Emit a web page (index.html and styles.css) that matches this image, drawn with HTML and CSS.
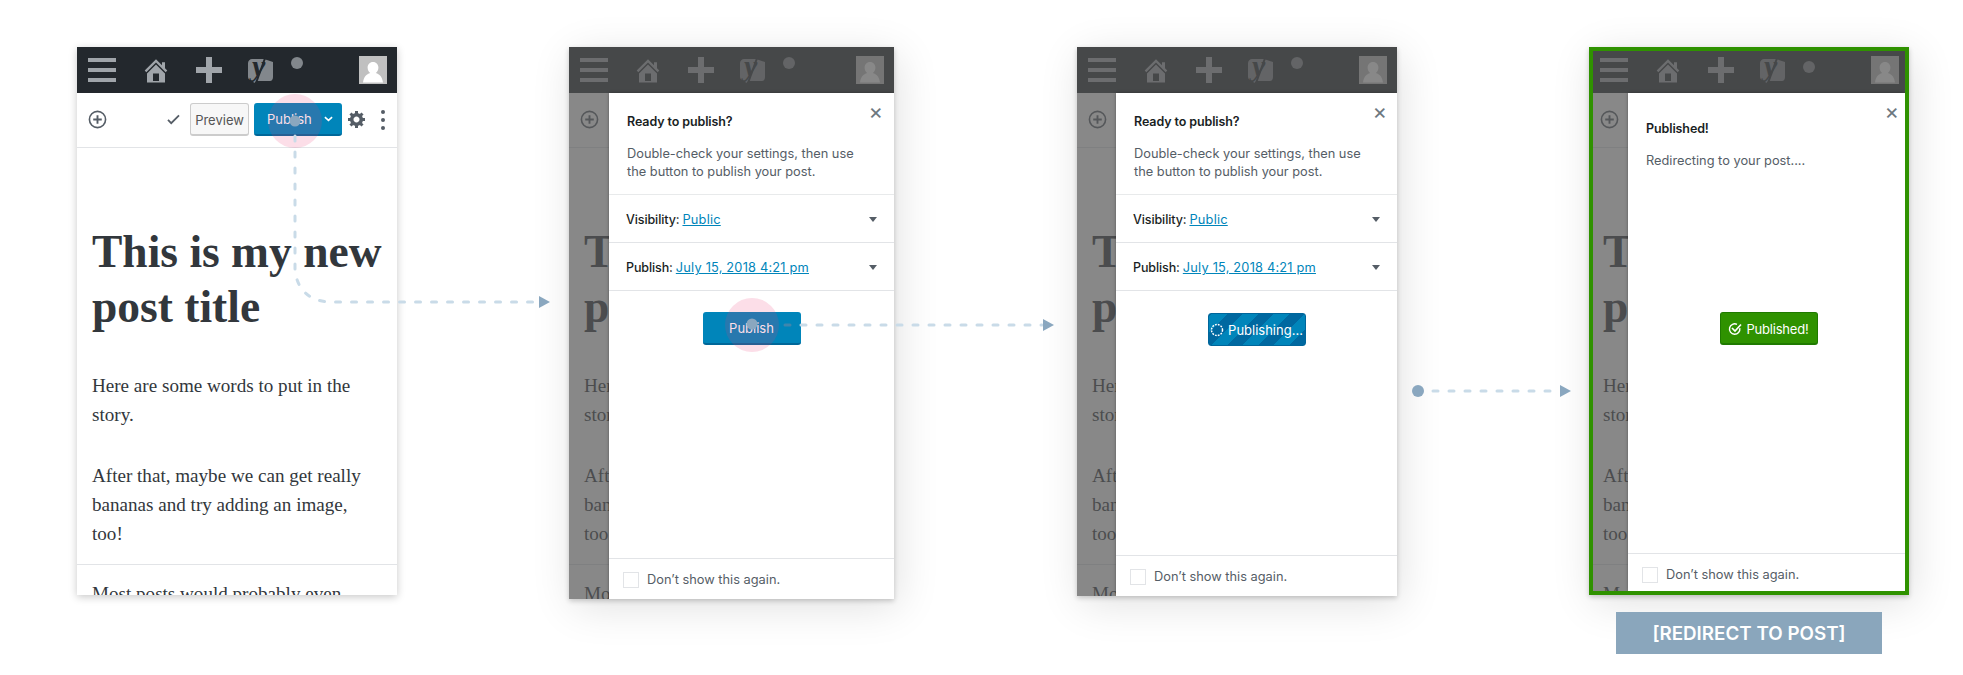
FILE: index.html
```html
<!DOCTYPE html>
<html>
<head>
  <meta charset="utf-8">
  <title>Publish flow</title>
  <link rel="stylesheet" href="styles.css">
</head>
<body>
  <svg class="defs" width="0" height="0">
    <symbol id="i-home" viewBox="2 2 16 16"><path d="M16 8.5l1.53 1.53-1.06 1.06L10 4.62l-6.47 6.47-1.06-1.06L10 2.5l4 4v-2h2v4zm-6-2.46l6 5.99V18H4v-5.97zM12 17v-5H8v5h4z"/></symbol>
    <symbol id="i-plus" viewBox="0 0 26 26"><path d="M10 0h6v10h10v6H16v10h-6V16H0v-6h10z"/></symbol>
    <symbol id="i-avatar" viewBox="0 0 28 28"><path d="M0 0h28v28H0z" class="avatar-bg"/><path d="M14 6c3.3 0 5.4 2.5 5.4 5.6 0 2.400-1.100 4.300-2.600 5.400 3.800 1.100 6.400 4 7.200 9.500H4c.8-5.500 3.400-8.400 7.200-9.500-1.500-1.100-2.600-3-2.600-5.400C8.600 8.500 10.700 6 14 6z" class="avatar-fg"/></symbol>
    <symbol id="i-add" viewBox="0 0 20 20"><circle cx="10" cy="10" r="8.500" fill="none" stroke="currentColor" stroke-width="1.700"/><path d="M9 5.500h2V9h3.500v2H11v3.500H9V11H5.500V9H9z" fill="currentColor"/></symbol>
  </svg>

  <main class="canvas">

    <section class="phone phone-one">
      <header class="adminbar">
        <div class="burger"><i></i><i></i><i></i></div>
        <svg class="ico-home"><use href="#i-home"/></svg>
        <svg class="ico-plus"><use href="#i-plus"/></svg>
        <svg class="ico-yoast" viewBox="0 0 27 30"><path d="M5 4h12l9 3v15c0 2-1 4-3 4H10l-3 2-1-2c-3 0-5-2-5-4V8c0-2 2-4 4-4z"/><text class="yoast-y" x="5" y="21">y</text><path class="yoast-cut" d="M19 .5L9 28"/></svg>
        <span class="dot"></span>
        <svg class="ico-avatar"><use href="#i-avatar"/></svg>
      </header>
      <div class="toolbar">
        <svg class="ico-add"><use href="#i-add"/></svg>
        <svg class="ico-saved" viewBox="0 0 14 12"><path d="M1 6.500l3.500 3.500L13 1.500" fill="none" stroke="currentColor" stroke-width="2"/></svg>
        <button class="btn-preview">Preview</button>
        <div class="btn-split">
          <span class="btn-split-label">Publish</span>
          <svg class="ico-chevron" viewBox="0 0 10 6"><path d="M1 1l4 3.500L9 1" fill="none" stroke="currentColor" stroke-width="1.800"/></svg>
        </div>
        <svg class="ico-gear" viewBox="1 2 17 17"><path d="M18 12h-2.180c-.17.7-.44 1.350-.81 1.930l1.540 1.540-2.100 2.100-1.540-1.540c-.58.36-1.230.63-1.910.79V19H8v-2.180c-.68-.16-1.330-.43-1.910-.79l-1.540 1.540-2.120-2.120 1.540-1.540c-.36-.58-.63-1.230-.79-1.910H1V9.030h2.170c.16-.7.44-1.350.8-1.940L2.430 5.550l2.100-2.100 1.540 1.540c.58-.37 1.240-.64 1.930-.81V2h3v2.180c.68.16 1.330.43 1.910.79l1.540-1.540 2.120 2.120-1.540 1.540c.36.59.64 1.240.8 1.940H18V12zm-8.500 1.500c1.660 0 3-1.340 3-3s-1.340-3-3-3-3 1.340-3 3 1.340 3 3 3z"/></svg>
        <div class="kebab"><i></i><i></i><i></i></div>
      </div>
      <article class="post">
        <h1>This is my new post title</h1>
        <p>Here are some words to put in the story.</p>
        <p>After that, maybe we can get really bananas and try adding an image, too!</p>
        <hr>
        <p>Most posts would probably even</p>
      </article>
    </section>

    <section class="phone phone-two">
      <header class="adminbar">
        <div class="burger"><i></i><i></i><i></i></div>
        <svg class="ico-home"><use href="#i-home"/></svg>
        <svg class="ico-plus"><use href="#i-plus"/></svg>
        <svg class="ico-yoast" viewBox="0 0 27 30"><path d="M5 4h12l9 3v15c0 2-1 4-3 4H10l-3 2-1-2c-3 0-5-2-5-4V8c0-2 2-4 4-4z"/><text class="yoast-y" x="5" y="21">y</text><path class="yoast-cut" d="M19 .5L9 28"/></svg>
        <span class="dot"></span>
        <svg class="ico-avatar"><use href="#i-avatar"/></svg>
      </header>
      <div class="toolbar">
        <svg class="ico-add"><use href="#i-add"/></svg>
      </div>
      <article class="post">
        <h1>This is my new post title</h1>
        <p>Here are some words to put in the story.</p>
        <p>After that, maybe we can get really bananas and try adding an image, too!</p>
        <hr>
        <p>Most posts would probably even</p>
      </article>
      <div class="dim"></div>
      <aside class="modal">
        <button class="modal-close">&times;</button>
        <div class="modal-head">
          <h2>Ready to publish?</h2>
          <p>Double-check your settings, then use the button to publish your post.</p>
        </div>
        <div class="modal-row"><b>Visibility:</b> <a href="#">Public</a><span class="caret"></span></div>
        <div class="modal-row"><b>Publish:</b> <a href="#">July 15, 2018 4:21 pm</a><span class="caret"></span></div>
        <div class="modal-action"><span class="btn-big">Publish</span></div>
        <label class="modal-foot"><span class="box"></span>Don&rsquo;t show this again.</label>
      </aside>
    </section>

    <section class="phone phone-three">
      <header class="adminbar">
        <div class="burger"><i></i><i></i><i></i></div>
        <svg class="ico-home"><use href="#i-home"/></svg>
        <svg class="ico-plus"><use href="#i-plus"/></svg>
        <svg class="ico-yoast" viewBox="0 0 27 30"><path d="M5 4h12l9 3v15c0 2-1 4-3 4H10l-3 2-1-2c-3 0-5-2-5-4V8c0-2 2-4 4-4z"/><text class="yoast-y" x="5" y="21">y</text><path class="yoast-cut" d="M19 .5L9 28"/></svg>
        <span class="dot"></span>
        <svg class="ico-avatar"><use href="#i-avatar"/></svg>
      </header>
      <div class="toolbar">
        <svg class="ico-add"><use href="#i-add"/></svg>
      </div>
      <article class="post">
        <h1>This is my new post title</h1>
        <p>Here are some words to put in the story.</p>
        <p>After that, maybe we can get really bananas and try adding an image, too!</p>
        <hr>
        <p>Most posts would probably even</p>
      </article>
      <div class="dim"></div>
      <aside class="modal">
        <button class="modal-close">&times;</button>
        <div class="modal-head">
          <h2>Ready to publish?</h2>
          <p>Double-check your settings, then use the button to publish your post.</p>
        </div>
        <div class="modal-row"><b>Visibility:</b> <a href="#">Public</a><span class="caret"></span></div>
        <div class="modal-row"><b>Publish:</b> <a href="#">July 15, 2018 4:21 pm</a><span class="caret"></span></div>
        <div class="modal-action">
          <span class="btn-big btn-busy">
            <svg class="ico-spin" viewBox="0 0 14 14"><circle cx="7" cy="7" r="5.500" fill="none" stroke="#fff" stroke-width="1.500" stroke-dasharray="1.800 1.100"/></svg>
            Publishing...
          </span>
        </div>
        <label class="modal-foot"><span class="box"></span>Don&rsquo;t show this again.</label>
      </aside>
    </section>

    <section class="phone phone-four">
      <header class="adminbar">
        <div class="burger"><i></i><i></i><i></i></div>
        <svg class="ico-home"><use href="#i-home"/></svg>
        <svg class="ico-plus"><use href="#i-plus"/></svg>
        <svg class="ico-yoast" viewBox="0 0 27 30"><path d="M5 4h12l9 3v15c0 2-1 4-3 4H10l-3 2-1-2c-3 0-5-2-5-4V8c0-2 2-4 4-4z"/><text class="yoast-y" x="5" y="21">y</text><path class="yoast-cut" d="M19 .5L9 28"/></svg>
        <span class="dot"></span>
        <svg class="ico-avatar"><use href="#i-avatar"/></svg>
      </header>
      <div class="toolbar">
        <svg class="ico-add"><use href="#i-add"/></svg>
      </div>
      <article class="post">
        <h1>This is my new post title</h1>
        <p>Here are some words to put in the story.</p>
        <p>After that, maybe we can get really bananas and try adding an image, too!</p>
        <hr>
        <p>Most posts would probably even</p>
      </article>
      <div class="dim"></div>
      <aside class="modal">
        <button class="modal-close">&times;</button>
        <div class="modal-head">
          <h2>Published!</h2>
          <p>Redirecting to your post....</p>
        </div>
        <div class="modal-action">
          <span class="btn-big btn-done">
            <svg class="ico-done" viewBox="0 0 14 14"><path d="M11.800 6.200A5.200 5.200 0 1 1 9 2.400" fill="none" stroke="#fff" stroke-width="1.400"/><path d="M4 6l3 3 6-6.500" fill="none" stroke="#fff" stroke-width="1.700"/></svg>
            Published!
          </span>
        </div>
        <label class="modal-foot"><span class="box"></span>Don&rsquo;t show this again.</label>
      </aside>
    </section>

    <div class="redirect">[REDIRECT TO POST]</div>

    <svg class="flow" width="1963" height="675" viewBox="0 0 1963 675">
      <circle class="tap" cx="295" cy="121" r="27"/>
      <path class="dash" d="M295 136V270C297 290 310 302 332 302H538"/>
      <circle class="node" cx="295" cy="121" r="5.500"/>
      <path class="node" d="M539 296l11 6-11 6z"/>

      <circle class="tap" cx="752" cy="325" r="27"/>
      <path class="dash dash-over" d="M785 325H790"/>
      <path class="dash" d="M801 325H1042"/>
      <circle class="node" cx="752" cy="324" r="5.500"/>
      <path class="node" d="M1043 319l11 6-11 6z"/>

      <circle class="node" cx="1418" cy="391" r="6"/>
      <path class="dash" d="M1433 391H1553"/>
      <path class="node" d="M1560 385l11 6-11 6z"/>
    </svg>
  </main>
</body>
</html>
```

FILE: styles.css
```css
* {
  box-sizing: border-box;
}
html, body {
  margin: 0;
  background: #fff;
}
.defs {
  position: absolute;
}
.canvas {
  position: relative;
  width: 1963px;
  height: 675px;
  overflow: hidden;
  font-family: Inter, "Liberation Sans", sans-serif;
}

/* the four screens sit on the canvas like frames of a diagram */
.phone {
  position: absolute;
  top: 47px;
  overflow: hidden;
  background: #fff;
  box-shadow: 0 2px 8px rgba(0, 0, 0, .22);
}
.phone-one {
  left: 77px;
  width: 320px;
  height: 548px;
}
.phone-two {
  left: 569px;
  width: 325px;
  height: 552px;
  box-shadow: 0 2px 5px rgba(0, 0, 0, .2), 4px 8px 40px rgba(0, 0, 0, .12);
}
.phone-three {
  left: 1077px;
  width: 320px;
  height: 549px;
  box-shadow: 0 2px 5px rgba(0, 0, 0, .2), 4px 8px 40px rgba(0, 0, 0, .12);
}
.phone-four {
  left: 1589px;
  width: 320px;
  height: 548px;
  border: 4px solid #2f9200;
  box-shadow: 0 2px 5px rgba(0, 0, 0, .2), 4px 8px 40px rgba(0, 0, 0, .12);
}

/* admin bar */
.adminbar {
  display: flex;
  align-items: center;
  gap: 28px;
  height: 46px;
  padding: 0 10px 0 11px;
  background: #23282d;
}
.burger {
  display: flex;
  flex-direction: column;
  gap: 6px;
  width: 28px;
}
.burger i {
  display: block;
  height: 4px;
  background: #a0a5aa;
}
.ico-home {
  width: 24px;
  height: 25px;
  fill: #a0a5aa;
}
.ico-plus {
  width: 26px;
  height: 26px;
  fill: #a0a5aa;
}
.ico-yoast {
  width: 27px;
  height: 30px;
  margin-left: -3px;
  overflow: visible;
  fill: #82878c;
}
.yoast-cut {
  fill: none;
  stroke: #23282d;
  stroke-width: 2;
}
.yoast-y {
  font: italic bold 30px "Liberation Serif", serif;
  fill: #23282d;
}
.dot {
  align-self: flex-start;
  width: 12px;
  height: 12px;
  margin: 10px 0 0 -11px;
  border-radius: 50%;
  background: #82878c;
}
.ico-avatar {
  width: 28px;
  height: 28px;
  margin-left: auto;
}
.avatar-bg {
  fill: #c0c0c0;
}
.avatar-fg {
  fill: #fff;
}

/* editor toolbar */
.toolbar {
  display: flex;
  align-items: center;
  height: 55px;
  padding: 0 12px 1px 11px;
  border-bottom: 1px solid #e2e4e7;
  color: #555d66;
}
.ico-add {
  width: 19px;
  height: 19px;
}
.ico-saved {
  width: 13px;
  height: 11px;
  margin: 0 10px 0 auto;
}
.btn-preview {
  width: 59px;
  height: 33px;
  padding: 2px 0 0;
  border: 1px solid #ccc;
  border-bottom-width: 2px;
  border-radius: 3px;
  background: #f7f7f7;
  color: #555;
  font: 13px Inter, sans-serif;
}
.btn-split {
  display: flex;
  align-items: center;
  width: 88px;
  height: 33px;
  margin-left: 5px;
  border-radius: 3px;
  border-bottom: 2px solid #006799;
  background: #0085ba;
  color: #fff;
  font-size: 13px;
}
.btn-split-label {
  flex: 1;
  padding: 1px 0 0 13px;
}
.ico-chevron {
  width: 9px;
  height: 6px;
  margin-right: 9px;
}
.ico-gear {
  width: 17px;
  height: 17px;
  margin-left: 6px;
  fill: #555d66;
}
.kebab {
  display: flex;
  flex-direction: column;
  gap: 4px;
  margin-left: 16px;
}
.kebab i {
  display: block;
  width: 4px;
  height: 4px;
  border-radius: 50%;
  background: #555d66;
}

/* post body, same in every frame */
.post {
  padding: 0 0 0 15px;
  color: #32373c;
  font-family: "Liberation Serif", serif;
}
.post h1 {
  margin: 0;
  padding-top: 76px;
  font-size: 45.5px;
  line-height: 55px;
  font-weight: 700;
}
.post p {
  margin: 0;
  padding: 32px 22px 0 0;
  font-size: 19.1px;
  line-height: 29px;
}
.post h1 + p {
  padding-top: 37px;
}
.post hr {
  height: 1px;
  margin: 16px 0 0 -15px;
  border: 0;
  background: #e2e4e7;
}
.post hr + p {
  padding-top: 14px;
}

/* dimmed state */
.dim {
  position: absolute;
  inset: 0;
  background: rgba(85, 85, 85, .7);
}
.modal {
  position: absolute;
  top: 46px;
  right: 0;
  bottom: 0;
  display: flex;
  flex-direction: column;
  background: #fff;
  box-shadow: 0 0 3px rgba(0, 0, 0, .35);
  color: #191e23;
  font-size: 12.8px;
}
.phone-two .modal {
  width: 285px;
}
.phone-three .modal {
  width: 281px;
}
.phone-four .modal {
  top: 42px;
  width: 277px;
}
.modal-close {
  position: absolute;
  top: 8px;
  right: 11px;
  padding: 0;
  border: 0;
  background: none;
  color: #6c7781;
  font: 22px/20px Inter, sans-serif;
}
.phone-three .modal-close {
  right: 10px;
}
.phone-four .modal-close {
  right: 6px;
}
.modal-head {
  height: 102px;
  padding: 21px 18px 0;
  border-bottom: 1px solid #e8eaeb;
}
.modal-head h2 {
  margin: 0;
  font-size: 12.5px;
  line-height: 16px;
  font-weight: 600;
  letter-spacing: -.1px;
}
.modal-head p {
  margin: 15px 0 0;
  color: #555d66;
  line-height: 18px;
}
.modal-row {
  display: flex;
  align-items: center;
  gap: 3px;
  height: 48px;
  padding: 2px 17px 0;
  border-bottom: 1px solid #e2e4e7;
}
.modal-row b {
  font-size: 12.5px;
  font-weight: 500;
  letter-spacing: -.1px;
}
.modal-row a {
  color: #0085ba;
  letter-spacing: .2px;
}
.caret {
  width: 0;
  height: 0;
  margin-left: auto;
  border: 4.500px solid transparent;
  border-top: 5px solid #555d66;
  border-bottom: 0;
}
.modal-action {
  display: flex;
  justify-content: center;
  padding-top: 21px;
}
.phone-three .modal-action {
  padding-top: 22px;
}
.btn-big {
  display: flex;
  align-items: center;
  justify-content: center;
  gap: 4px;
  width: 98px;
  height: 33px;
  padding-top: 1px;
  border-radius: 3px;
  border-bottom: 2px solid #006799;
  background: #0085ba;
  color: #fff;
  font-size: 13px;
  white-space: nowrap;
}
.btn-busy {
  border: 1px solid #00669b;
  background: repeating-linear-gradient(-45deg, #0068a0 0 11px, #0085ba 11px 22px);
}
.btn-done {
  margin-left: 4px;
  border: 1px solid #1f7a00;
  border-bottom-width: 2px;
  background: #2f9200;
  letter-spacing: -.2px;
}
.ico-spin,
.ico-done {
  width: 14px;
  height: 14px;
}
.modal-foot {
  display: flex;
  align-items: center;
  gap: 8px;
  height: 41px;
  margin-top: auto;
  padding: 1px 14px 0;
  overflow: hidden;
  border-top: 1px solid #e2e4e7;
  color: #555d66;
}
.box {
  width: 16px;
  height: 16px;
  border: 1px solid #e2e4e7;
}

/* last frame differences */
.phone-four .adminbar {
  height: 42px;
  padding: 0 6px 4px 7px;
}
.phone-four .toolbar {
  padding-left: 7px;
}
.phone-four .post {
  padding-left: 10px;
}
.phone-four .post hr {
  margin-left: -10px;
}
.phone-four .modal-head {
  height: 148px;
  padding-top: 28px;
  border: 0;
}
.phone-four .modal-action {
  padding-top: 71px;
}
.phone-four .modal-foot {
  height: 38px;
  padding-top: 4px;
}

.redirect {
  position: absolute;
  left: 1616px;
  top: 612px;
  display: flex;
  align-items: center;
  justify-content: center;
  width: 266px;
  height: 42px;
  background: #8aa6bc;
  color: #fff;
  font-size: 18.8px;
  font-weight: 600;
}

/* connectors drawn over the frames */
.flow {
  position: absolute;
  top: 0;
  left: 0;
  pointer-events: none;
}
.tap {
  fill: rgba(240, 60, 120, .17);
}
.node {
  fill: #8aa7bf;
}
.dash {
  fill: none;
  stroke: #c9dbe8;
  stroke-width: 3;
  stroke-linecap: round;
  stroke-dasharray: 5 11;
}
.dash-over {
  stroke: #3f86ad;
}
```
